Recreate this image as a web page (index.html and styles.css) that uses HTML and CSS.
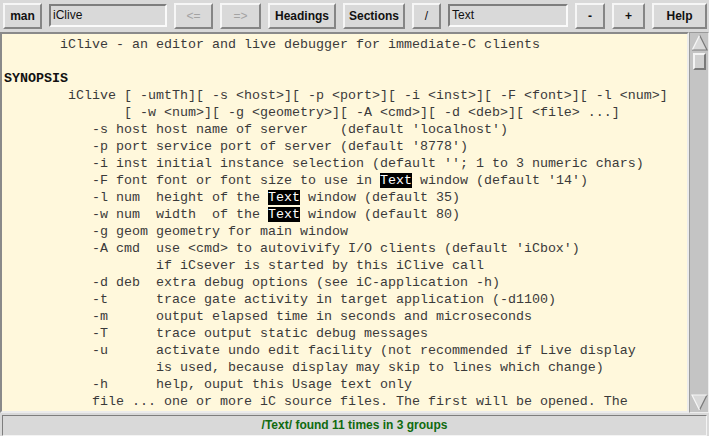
FILE: index.html
```html
<!DOCTYPE html>
<html>
<head>
<meta charset="utf-8">
<link rel="stylesheet" href="styles.css">
</head>
<body>
<div class="app">
  <div class="toolbar">
    <button class="btn w-man">man</button>
    <div class="entry w-file">iClive</div>
    <button class="btn disabled w-back">&lt;=</button>
    <button class="btn disabled w-fwd">=&gt;</button>
    <button class="btn w-head">Headings</button>
    <button class="btn w-sect">Sections</button>
    <button class="btn thin w-slash">/</button>
    <div class="entry w-search">Text</div>
    <button class="btn w-minus">-</button>
    <button class="btn w-plus">+</button>
    <button class="btn w-help">Help</button>
  </div>
  <div class="main">
    <div class="textframe">
<pre class="text">       iClive - an editor and live debugger for immediate-C clients

<b>SYNOPSIS</b>
        iClive [ -umtTh][ -s &lt;host&gt;][ -p &lt;port&gt;][ -i &lt;inst&gt;][ -F &lt;font&gt;][ -l &lt;num&gt;]
               [ -w &lt;num&gt;][ -g &lt;geometry&gt;][ -A &lt;cmd&gt;][ -d &lt;deb&gt;][ &lt;file&gt; ...]
           -s host host name of server    (default 'localhost')
           -p port service port of server (default '8778')
           -i inst initial instance selection (default ''; 1 to 3 numeric chars)
           -F font font or font size to use in <span class="hl">Text</span> window (default '14')
           -l num  height of the <span class="hl">Text</span> window (default 35)
           -w num  width  of the <span class="hl">Text</span> window (default 80)
           -g geom geometry for main window
           -A cmd  use &lt;cmd&gt; to autovivify I/O clients (default 'iCbox')
                   if iCsever is started by this iClive call
           -d deb  extra debug options (see iC-application -h)
           -t      trace gate activity in target application (-d1100)
           -m      output elapsed time in seconds and microseconds
           -T      trace output static debug messages
           -u      activate undo edit facility (not recommended if Live display
                   is used, because display may skip to lines which change)
           -h      help, ouput this Usage text only
           file ... one or more iC source files. The first will be opened. The
</pre>
    </div>
    <div class="scrollbar">
      <svg class="arrow" width="17" height="17" viewBox="0 0 17 17">
        <polygon points="8.5,1 16,16 1,16" fill="#d9d9d9"/>
        <polyline points="8.5,1 16,16 1,16" fill="none" stroke="#7a7a7a" stroke-width="1.2"/>
        <polyline points="1.5,15.5 8.5,1.5" fill="none" stroke="#f6f6f6" stroke-width="1.2"/>
      </svg>
      <div class="slider"></div>
      <div class="trough"></div>
      <svg class="arrow" width="17" height="17" viewBox="0 0 17 17">
        <polygon points="1,1 16,1 8.5,16" fill="#d9d9d9"/>
        <polyline points="16,1 8.5,16" fill="none" stroke="#7a7a7a" stroke-width="1.2"/>
        <polyline points="8.5,16 1,1 16,1" fill="none" stroke="#f6f6f6" stroke-width="1.2"/>
      </svg>
    </div>
  </div>
  <div class="status">/Text/ found 11 times in 3 groups</div>
</div>
</body>
</html>
```
FILE: styles.css
```css
html, body {
  margin: 0;
  padding: 0;
  background: #d9d9d9;
}
.app {
  width: 709px;
  height: 436px;
  display: flex;
  flex-direction: column;
  background: #d9d9d9;
  overflow: hidden;
}
.toolbar {
  height: 32px;
  display: flex;
  align-items: flex-start;
  gap: 7px;
  padding: 3px 0 0 3px;
  box-sizing: border-box;
}
.btn {
  height: 26px;
  margin: 0;
  padding: 0;
  box-sizing: border-box;
  background: #d9d9d9;
  border: 2px solid;
  border-color: #f6f6f6 #858585 #858585 #f6f6f6;
  font-family: "Liberation Sans", Arial, sans-serif;
  font-weight: bold;
  font-size: 12px;
  color: #111;
  text-align: center;
}
.btn.thin {
  font-weight: normal;
}
.btn.disabled {
  color: #a3a3a3;
  font-weight: normal;
}
.entry {
  height: 23px;
  margin-top: 1px;
  box-sizing: border-box;
  border: 2px solid;
  border-color: #7e7e7e #fafafa #fafafa #7e7e7e;
  background: #d9d9d9;
  font-family: "Liberation Sans", Arial, sans-serif;
  font-size: 12px;
  line-height: 19px;
  padding-left: 2px;
  color: #111;
}
.w-man { width: 39px; }
.w-file { width: 118px; }
.w-back { width: 39px; }
.w-fwd { width: 41px; }
.w-head { width: 68px; }
.w-sect { width: 62px; }
.w-slash { width: 29px; }
.w-search { width: 120px; }
.w-minus { width: 30px; }
.w-plus { width: 33px; }
.w-help { width: 55px; }

.main {
  height: 381px;
  display: flex;
}
.textframe {
  width: 689px;
  box-sizing: border-box;
  border: 2px solid;
  border-color: #8a8a8a #ececec #ececec #8a8a8a;
  background: #fff8dc;
  overflow: hidden;
}
.text {
  margin: 0;
  padding: 2px 0 0 2px;
  font-family: "Courier New", "Nimbus Mono PS", "Nimbus Mono L", FreeMono, "Liberation Mono", monospace;
  font-size: 13.33px;
  line-height: 17px;
  color: #3a3a3a;
  white-space: pre;
}
.text b {
  font-weight: bold;
  color: #111;
}
.hl {
  background: #000;
  color: #fff;
}
.scrollbar {
  width: 20px;
  display: flex;
  flex-direction: column;
  align-items: center;
  background: #c4c4c4;
  border: 1px solid;
  border-color: #9a9a9a #eeeeee #eeeeee #9a9a9a;
  padding: 1px 0;
  box-sizing: border-box;
}
.arrow {
  display: block;
  flex: none;
}
.slider {
  width: 13px;
  height: 17px;
  margin-top: 2px;
  box-sizing: border-box;
  background: #d0d0d0;
  border: 2px solid;
  border-color: #f4f4f4 #7a7a7a #7a7a7a #f4f4f4;
}
.trough {
  flex: 1;
}
.status {
  height: 21px;
  margin: 2px 2px 0 2px;
  box-sizing: border-box;
  border: 1px solid;
  border-color: #7e7e7e #f4f4f4 #f4f4f4 #7e7e7e;
  font-family: "Liberation Sans", Arial, sans-serif;
  font-weight: bold;
  font-size: 12px;
  line-height: 19px;
  text-align: center;
  color: #0f6a0f;
}
```
